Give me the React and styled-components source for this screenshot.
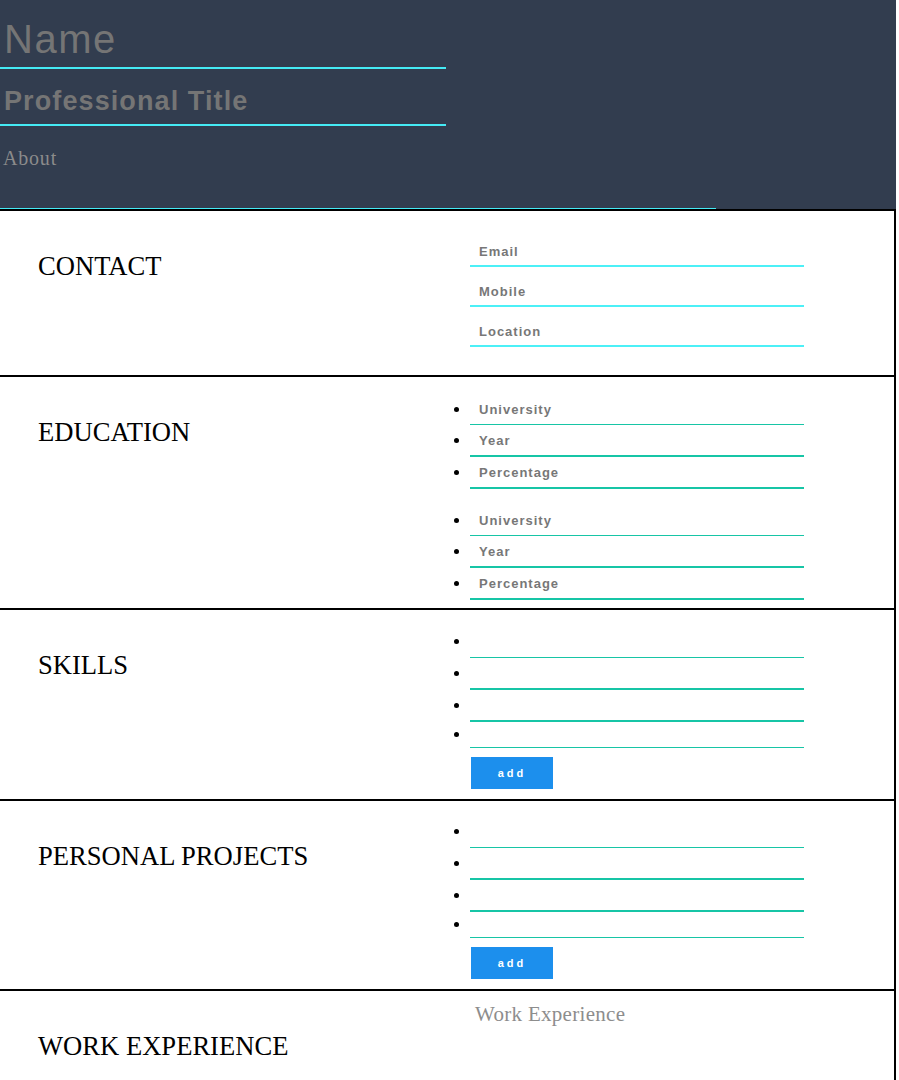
import React from "react";
import styled, { createGlobalStyle } from "styled-components";

const GlobalStyle = createGlobalStyle`
  body {
    margin: 0;
    background: #fff;
    font-family: "Liberation Serif", "Times New Roman", serif;
  }
  * { box-sizing: border-box; }
`;

const Page = styled.div`
  width: 896px;
`;

const Header = styled.header`
  background: #323d4f;
  display: flex;
  flex-direction: column;
  align-items: flex-start;
`;

const TopInput = styled.input`
  display: block;
  width: 446px;
  height: ${(p) => p.$h}px;
  padding: ${(p) => p.$pt}px 0 0 4px;
  margin: 0;
  border: none;
  border-bottom: 2px solid #45ebf5;
  background: transparent;
  outline: none;
  font-family: "Liberation Sans", Arial, sans-serif;
  font-size: ${(p) => p.$size}px;
  font-weight: ${(p) => (p.$bold ? 700 : 400)};
  letter-spacing: ${(p) => p.$ls}px;
  color: #ddd;
  &::placeholder { color: #757575; }
`;

const About = styled.textarea`
  display: block;
  width: 716px;
  height: 83px;
  margin: 0;
  padding: 21px 3px 0;
  border: none;
  border-bottom: 1px solid #45ebf5;
  background: transparent;
  outline: none;
  resize: none;
  font-family: "Liberation Serif", "Times New Roman", serif;
  font-size: 20px;
  letter-spacing: 0.8px;
  color: #ddd;
  &::placeholder { color: #8b8b8b; }
`;

const Section = styled.section`
  display: grid;
  grid-template-columns: 448px 1fr;
  border-top: 2px solid #000;
  border-right: 2px solid #000;
`;

const Heading = styled.h2`
  margin: 0;
  padding: 40px 0 0 38px;
  font-family: "Liberation Serif", "Times New Roman", serif;
  font-size: 26.6px;
  font-weight: 400;
  line-height: 30px;
  color: #000;
`;

const Column = styled.div`
  padding: ${(p) => p.$pad};
`;

const ContactInput = styled.input`
  display: block;
  width: 334px;
  height: 28px;
  margin: 0 0 12px 22px;
  padding: 0 0 2px 9px;
  border: none;
  border-bottom: 2px solid #4cf0f7;
  outline: none;
  background: transparent;
  font-family: "Liberation Sans", Arial, sans-serif;
  font-size: 13px;
  font-weight: 700;
  letter-spacing: 1px;
  color: #444;
  &:last-child { margin-bottom: 0; }
  &::placeholder { color: #777; }
`;

const List = styled.ul`
  margin: ${(p) => (p.$gap ? p.$gap : 16)}px 0 0;
  padding: 0 0 0 22px;
  list-style: disc outside;
  color: #000;
  font-size: 16px;
`;

const Item = styled.li`
  font-family: "Liberation Serif", "Times New Roman", serif;
`;

const ItemInput = styled.input`
  display: inline-block;
  vertical-align: baseline;
  width: 334px;
  height: ${(p) => p.$h}px;
  margin: 0;
  padding: 0 0 0 9px;
  border: none;
  border-bottom: ${(p) => (p.$thin ? 1 : 2)}px solid #17c5a6;
  outline: none;
  background: transparent;
  font-family: "Liberation Sans", Arial, sans-serif;
  font-size: 13px;
  font-weight: 700;
  letter-spacing: 1px;
  color: #444;
  &::placeholder { color: #777; }
`;

const AddButton = styled.button`
  display: block;
  width: 82px;
  height: 32px;
  margin: 9px 0 0 23px;
  padding: 0;
  border: none;
  background: #1c8fed;
  color: #fff;
  font-family: "Liberation Sans", Arial, sans-serif;
  font-size: 11px;
  font-weight: 700;
  letter-spacing: 3px;
  cursor: pointer;
`;

const WorkText = styled.textarea`
  display: block;
  width: 334px;
  height: 160px;
  margin: 9px 0 0 22px;
  padding: 2px 5px;
  border: none;
  outline: none;
  resize: none;
  font-family: "Liberation Serif", "Times New Roman", serif;
  font-size: 21px;
  letter-spacing: 0.3px;
  color: #333;
  &::placeholder { color: #8d8d8d; }
`;

const eduRows = [
  { ph: "University", h: 31, thin: true },
  { ph: "Year", h: 32 },
  { ph: "Percentage", h: 32 },
];

const listRows = [
  { h: 32, thin: true },
  { h: 32 },
  { h: 32 },
  { h: 26, thin: true },
];

const EduGroup = ({ gap }) => (
  <List $gap={gap}>
    {eduRows.map((r, i) => (
      <Item key={i}>
        <ItemInput placeholder={r.ph} $h={r.h} $thin={r.thin} />
      </Item>
    ))}
  </List>
);

const AddList = ({ gap, bottom }) => (
  <Column $pad={`0 0 ${bottom}px 0`}>
    <List $gap={gap}>
      {listRows.map((r, i) => (
        <Item key={i}>
          <ItemInput $h={r.h} $thin={r.thin} />
        </Item>
      ))}
    </List>
    <AddButton>add</AddButton>
  </Column>
);

export default function App() {
  return (
    <>
      <GlobalStyle />
      <Page>
        <Header>
          <TopInput placeholder="Name" $h={69} $pt={11} $size={40} $ls={1.5} />
          <TopInput
            placeholder="Professional Title"
            $h={57}
            $pt={9}
            $size={27}
            $ls={1.1}
            $bold
          />
          <About placeholder="About" />
        </Header>

        <Section>
          <Heading>CONTACT</Heading>
          <Column $pad="28px 0 28px 0">
            <ContactInput placeholder="Email" />
            <ContactInput placeholder="Mobile" />
            <ContactInput placeholder="Location" />
          </Column>
        </Section>

        <Section>
          <Heading>EDUCATION</Heading>
          <Column $pad="0 0 8px 0">
            <EduGroup gap={17} />
            <EduGroup />
          </Column>
        </Section>

        <Section>
          <Heading>SKILLS</Heading>
          <AddList gap={16} bottom={10} />
        </Section>

        <Section>
          <Heading>PERSONAL PROJECTS</Heading>
          <AddList gap={15} bottom={10} />
        </Section>

        <Section>
          <Heading>WORK EXPERIENCE</Heading>
          <Column $pad="0">
            <WorkText placeholder="Work Experience" />
          </Column>
        </Section>
      </Page>
    </>
  );
}
